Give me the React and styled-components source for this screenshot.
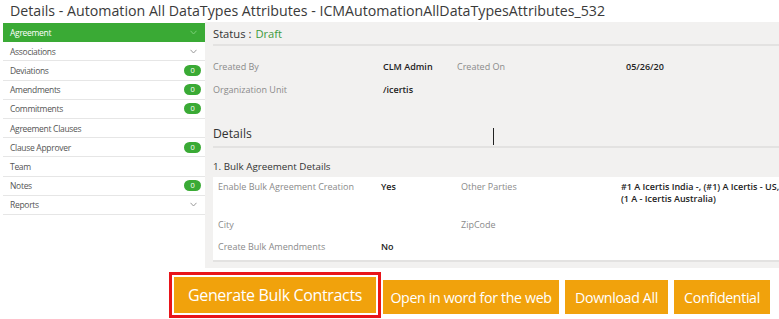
import React from "react";
import styled, { createGlobalStyle } from "styled-components";

const Global = createGlobalStyle`
  html, body { margin: 0; padding: 0; background: #fff; }
  body { font-family: "Open Sans", "Noto Sans", sans-serif; color: #333; }
`;

const Page = styled.div`
  width: 779px;
  height: 319px;
  overflow: hidden;
  display: flex;
  flex-direction: column;
`;

const Title = styled.h1`
  margin: 0;
  height: 22px;
  padding-left: 10px;
  font-size: 14.2px;
  font-weight: 400;
  line-height: 22px;
  color: #3a3a3a;
  white-space: nowrap;
`;

const Body = styled.div`
  display: flex;
  height: 246px;
`;

const Sidebar = styled.nav`
  margin-left: 3px;
  margin-top: 1px;
  width: 202px;
  flex: none;
  background: #fff;
  align-self: flex-start;
`;

const NavItem = styled.div`
  height: 19.2px;
  box-sizing: border-box;
  display: flex;
  align-items: center;
  justify-content: space-between;
  padding: 0 4px 0 7px;
  font-size: 8.5px;
  letter-spacing: -0.3px;
  color: ${(p) => (p.$active ? "#fff" : "#555")};
  background: ${(p) => (p.$active ? "#3aaa35" : "#fff")};
  border-bottom: 1px solid ${(p) => (p.$active ? "#3aaa35" : "#e6e6e6")};
`;

const Badge = styled.span`
  width: 17px;
  height: 11px;
  border-radius: 6px;
  background: #3aaa35;
  color: #fff;
  font-size: 7.5px;
  line-height: 11px;
  text-align: center;
`;

const Chevron = styled.svg`
  width: 7px;
  height: 5px;
  margin-right: 4px;
  stroke: ${(p) => (p.$light ? "#7ccf78" : "#999")};
  fill: none;
  stroke-width: 1;
`;

const Main = styled.main`
  flex: 1;
  background: #f2f1f0;
  padding-left: 8px;
  display: flex;
  flex-direction: column;
`;

const StatusRow = styled.div`
  height: 22px;
  display: flex;
  align-items: center;
  font-size: 11.2px;
  color: #333;
  border-bottom: 2px solid #e3e2e1;
  gap: 4px;
`;

const Draft = styled.span`
  color: #3c9a3c;
`;

const InfoGrid = styled.div`
  display: grid;
  grid-template-columns: 170px 74px 169px 1fr;
  grid-auto-rows: 23px;
  align-items: center;
  margin-top: 9px;
  font-size: 9px;
`;

const Label = styled.span`
  color: #8a8a8a;
  white-space: nowrap;
`;

const Value = styled.span`
  color: #222;
  font-weight: 600;
  white-space: nowrap;
  line-height: 12px;
`;

const SectionHead = styled.div`
  position: relative;
  margin-top: 22px;
  height: 25px;
  box-sizing: border-box;
  padding-bottom: 3px;
  display: flex;
  align-items: center;
  font-size: 12.2px;
  color: #333;
  border-bottom: 2px solid #e3e2e1;
  flex: none;
`;

const Caret = styled.span`
  position: absolute;
  left: 280px;
  top: 5px;
  width: 1px;
  height: 17px;
  background: #222;
`;

const SubHead = styled.div`
  height: 29px;
  box-sizing: border-box;
  padding-top: 7px;
  display: flex;
  align-items: center;
  font-size: 9.8px;
  color: #333;
  flex: none;
`;

const Panel = styled.div`
  background: #fff;
  margin-right: 4px;
  padding: 4px 0 0 5px;
  height: 85px;
  box-sizing: border-box;
  border-bottom: 2px solid #e3e2e1;
  display: grid;
  grid-template-columns: 163px 80px 160px 1fr;
  grid-template-rows: 38px 22px 1fr;
  font-size: 9px;
  align-items: start;
  flex: none;
`;

const Cell = styled.div`
  line-height: 12px;
`;

const Actions = styled.div`
  display: flex;
  align-items: flex-start;
  gap: 6px;
  margin-left: 169px;
  margin-top: 4px;
`;

const Highlight = styled.div`
  display: flex;
  border: 3px solid #e8141a;
  padding: 2px;
  background: #fff;
  margin-right: -4px;
`;

const Button = styled.button`
  border: none;
  background: #f1a20c;
  color: #fff;
  font-family: "Open Sans", "Noto Sans", sans-serif;
  font-size: ${(p) => (p.$tall ? 16 : 14.2)}px;
  letter-spacing: -0.35px;
  width: ${(p) => p.$w}px;
  height: ${(p) => (p.$tall ? 36 : 34)}px;
  padding: 0;
  margin-top: ${(p) => (p.$tall ? 0 : 8)}px;
  cursor: pointer;
  white-space: nowrap;
`;

const down = "M0.5 0.8 L3.5 4 L6.5 0.8";

const nav = [
  { t: "Agreement", active: true, chev: true },
  { t: "Associations", chev: true },
  { t: "Deviations", badge: true },
  { t: "Amendments", badge: true },
  { t: "Commitments", badge: true },
  { t: "Agreement Clauses" },
  { t: "Clause Approver", badge: true },
  { t: "Team" },
  { t: "Notes", badge: true },
  { t: "Reports", chev: true },
];

export default function App() {
  return (
    <Page>
      <Global />
      <Title>Details - Automation All DataTypes Attributes - ICMAutomationAllDataTypesAttributes_532</Title>
      <Body>
        <Sidebar>
          {nav.map((n) => (
            <NavItem key={n.t} $active={n.active}>
              <span>{n.t}</span>
              {n.badge && <Badge>0</Badge>}
              {n.chev && (
                <Chevron viewBox="0 0 7 5" $light={n.active}>
                  <path d={down} />
                </Chevron>
              )}
            </NavItem>
          ))}
        </Sidebar>
        <Main>
          <StatusRow>
            <span>Status :</span>
            <Draft>Draft</Draft>
          </StatusRow>
          <InfoGrid>
            <Label>Created By</Label>
            <Value>CLM Admin</Value>
            <Label>Created On</Label>
            <Value>05/26/20</Value>
            <Label>Organization Unit</Label>
            <Value>/icertis</Value>
            <span />
            <span />
          </InfoGrid>
          <SectionHead>
            Details
            <Caret />
          </SectionHead>
          <SubHead>1. Bulk Agreement Details</SubHead>
          <Panel>
            <Cell><Label>Enable Bulk Agreement Creation</Label></Cell>
            <Cell><Value>Yes</Value></Cell>
            <Cell><Label>Other Parties</Label></Cell>
            <Cell><Value>#1 A Icertis India -, (#1) A Icertis - US,<br />(1 A - Icertis Australia)</Value></Cell>
            <Cell><Label>City</Label></Cell>
            <Cell />
            <Cell><Label>ZipCode</Label></Cell>
            <Cell />
            <Cell><Label>Create Bulk Amendments</Label></Cell>
            <Cell><Value>No</Value></Cell>
            <Cell />
            <Cell />
          </Panel>
        </Main>
      </Body>
      <Actions>
        <Highlight>
          <Button $tall $w={202}>Generate Bulk Contracts</Button>
        </Highlight>
        <Button $w={176}>Open in word for the web</Button>
        <Button $w={103}>Download All</Button>
        <Button $w={96}>Confidential</Button>
      </Actions>
    </Page>
  );
}
